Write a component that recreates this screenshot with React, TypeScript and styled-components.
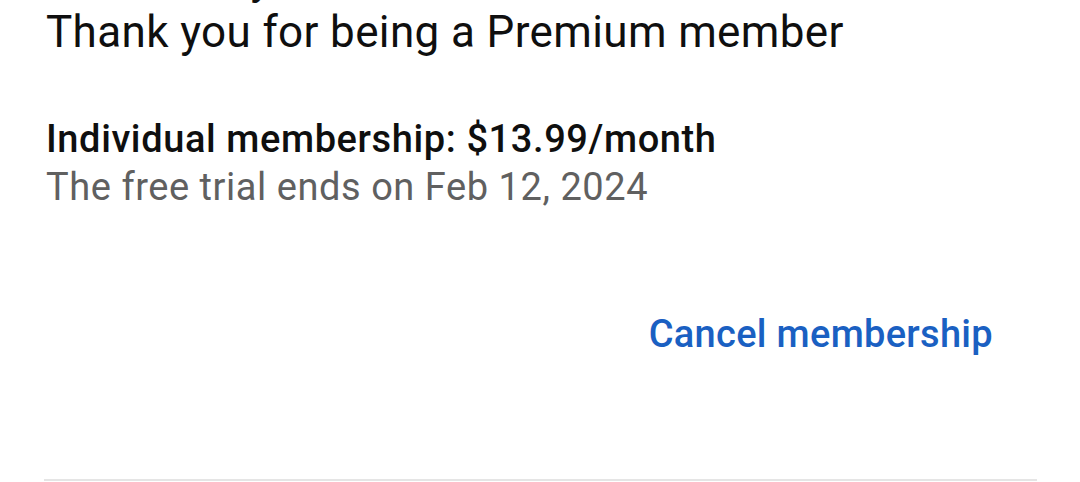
import React from "react";
import styled, { createGlobalStyle } from "styled-components";

const Global = createGlobalStyle`
  html, body { margin: 0; padding: 0; background: #ffffff; }
  body { font-family: Roboto, "Noto Sans", Arial, sans-serif; -webkit-font-smoothing: antialiased; }
`;

const Page = styled.div`
  width: 1080px;
  height: 482px;
  overflow: hidden;
  box-sizing: border-box;
  padding: 0 43px 0 44px;
  display: flex;
  flex-direction: column;
  background: #fff;
`;

const Clip = styled.div`
  height: 6px;
  overflow: hidden;
  padding-left: 2px;
`;

const HiddenLine = styled.div`
  font-size: 44px;
  line-height: 52px;
  margin-top: -47px;
  color: #0f0f0f;
  white-space: nowrap;
`;

const Title = styled.h1`
  margin: 0;
  padding-left: 2px;
  font-size: 44px;
  font-weight: 400;
  letter-spacing: 0.37px;
  line-height: 52px;
  color: #0f0f0f;
  white-space: nowrap;
`;

const Plan = styled.div`
  margin-top: 57px;
  padding-left: 2px;
  display: flex;
  flex-direction: column;
`;

const PlanName = styled.div`
  font-size: 38px;
  font-weight: 500;
  letter-spacing: 0.6px;
  line-height: 48px;
  color: #0f0f0f;
  white-space: nowrap;
`;

const PlanNote = styled.div`
  font-size: 38px;
  font-weight: 400;
  letter-spacing: 0.55px;
  line-height: 48px;
  color: #606060;
  white-space: nowrap;
`;

const Actions = styled.div`
  margin-top: 99px;
  display: flex;
  justify-content: flex-end;
  padding-right: 44px;
`;

const LinkButton = styled.button`
  border: none;
  background: none;
  padding: 0;
  font-family: inherit;
  font-size: 38px;
  font-weight: 500;
  letter-spacing: 0.3px;
  line-height: 48px;
  color: #1a60c2;
  cursor: pointer;
`;

const Divider = styled.hr`
  margin: auto 0 1px 0;
  border: none;
  height: 2px;
  background: #e5e5e5;
`;

export default function App() {
  return (
    <>
      <Global />
      <Page>
        <Clip>
          <HiddenLine>We're ready</HiddenLine>
        </Clip>
        <Title>Thank you for being a Premium member</Title>
        <Plan>
          <PlanName>Individual membership: $13.99/month</PlanName>
          <PlanNote>The free trial ends on Feb 12, 2024</PlanNote>
        </Plan>
        <Actions>
          <LinkButton>Cancel membership</LinkButton>
        </Actions>
        <Divider />
      </Page>
    </>
  );
}
